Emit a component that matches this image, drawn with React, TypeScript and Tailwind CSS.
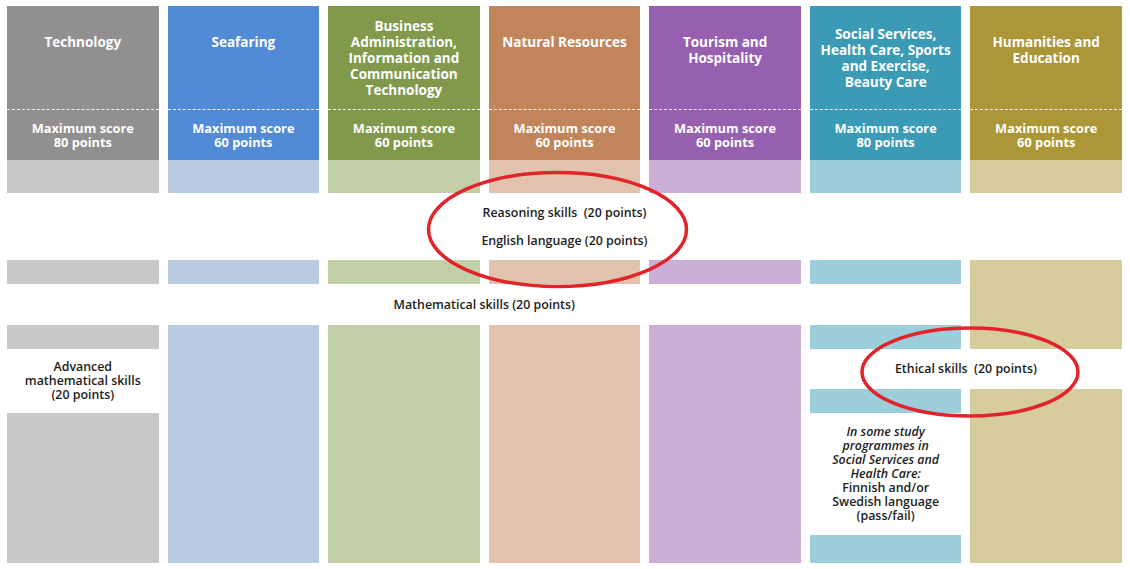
const font = { fontFamily: '"Open Sans", "Liberation Sans", sans-serif' };

type Programme = {
  title: string[];
  score: number;
  dark: string;
  light: string;
};

const programmes: Programme[] = [
  { title: ['Technology'], score: 80, dark: 'bg-[#918f90]', light: 'bg-[#c9c7c8]' },
  { title: ['Seafaring'], score: 60, dark: 'bg-[#518bd5]', light: 'bg-[#b9cbe1]' },
  {
    title: ['Business', 'Administration,', 'Information and', 'Communication', 'Technology'],
    score: 60,
    dark: 'bg-[#80994a]',
    light: 'bg-[#c2cfa6]',
  },
  { title: ['Natural Resources'], score: 60, dark: 'bg-[#c1845b]', light: 'bg-[#e0c2ad]' },
  { title: ['Tourism and', 'Hospitality'], score: 60, dark: 'bg-[#965fb0]', light: 'bg-[#cab0d7]' },
  {
    title: ['Social Services,', 'Health Care, Sports', 'and Exercise,', 'Beauty Care'],
    score: 80,
    dark: 'bg-[#3b9bb6]',
    light: 'bg-[#9ccddb]',
  },
  { title: ['Humanities and', 'Education'], score: 60, dark: 'bg-[#ab9737]', light: 'bg-[#d6cb9b]' },
];

const colStart = [
  'col-start-1',
  'col-start-2',
  'col-start-3',
  'col-start-4',
  'col-start-5',
  'col-start-6',
  'col-start-7',
];

function Header({ p, i }: { p: Programme; i: number }) {
  return (
    <div className={`${colStart[i]} row-start-1 flex flex-col ${p.dark} text-white`}>
      <div className="h-[104px] flex items-center justify-center border-b border-dashed border-white/90">
        <div className="min-h-[48px] text-center text-[13.5px] font-bold leading-4">
          {p.title.map((t) => (
            <div key={t}>{t}</div>
          ))}
        </div>
      </div>
      <div className="flex-1 flex flex-col items-center justify-center text-[12.8px] font-bold leading-[14px]">
        <div>Maximum score</div>
        <div>{p.score} points</div>
      </div>
    </div>
  );
}

export default function App() {
  const [tech, sea, bus, nat, tour, soc, hum] = programmes;
  return (
    <div className="relative w-[1130px] h-[569px] bg-white overflow-hidden" style={font}>
      <div className="grid grid-cols-7 gap-x-[9px] pl-[7px] pr-[8px] pt-[6px] grid-rows-[154px_33px_67px_24px_41px_24px_40px_24px_122px_28px] text-[#1d1d1b] text-[12.4px] font-semibold leading-[14px]">
        {programmes.map((p, i) => (
          <Header key={i} p={p} i={i} />
        ))}

        {/* top light band */}
        {programmes.map((p, i) => (
          <div key={`b${i}`} className={`${colStart[i]} row-start-2 ${p.light}`} />
        ))}

        {/* reasoning + english */}
        <div className="col-span-7 col-start-1 row-start-3 flex flex-col items-center justify-center gap-[14px]">
          <div>Reasoning skills&nbsp; (20 points)</div>
          <div>English language (20 points)</div>
        </div>

        {/* second light band, cols 1-6 */}
        {programmes.slice(0, 6).map((p, i) => (
          <div key={`d${i}`} className={`${colStart[i]} row-start-4 ${p.light}`} />
        ))}
        <div className={`col-start-7 row-start-4 row-span-3 ${hum.light}`} />

        {/* mathematical skills */}
        <div className="col-start-1 col-span-6 row-start-5 flex items-center justify-center">
          Mathematical skills (20 points)
        </div>

        {/* technology column */}
        <div className={`col-start-1 row-start-6 ${tech.light}`} />
        <div className="col-start-1 row-start-7 row-span-2 bg-white flex flex-col items-center justify-center text-center">
          <div>Advanced</div>
          <div>mathematical skills</div>
          <div>(20 points)</div>
        </div>
        <div className={`col-start-1 row-start-9 row-span-2 ${tech.light}`} />

        {/* plain tall columns */}
        <div className={`col-start-2 row-start-6 row-span-5 ${sea.light}`} />
        <div className={`col-start-3 row-start-6 row-span-5 ${bus.light}`} />
        <div className={`col-start-4 row-start-6 row-span-5 ${nat.light}`} />
        <div className={`col-start-5 row-start-6 row-span-5 ${tour.light}`} />

        {/* social services column */}
        <div className={`col-start-6 row-start-6 ${soc.light}`} />
        <div className="col-start-6 col-span-2 row-start-7 flex items-center justify-center">
          Ethical skills&nbsp; (20 points)
        </div>
        <div className={`col-start-6 row-start-8 ${soc.light}`} />
        <div className="col-start-6 row-start-9 flex flex-col items-center justify-center text-center">
          <div className="italic">In some study</div>
          <div className="italic">programmes in</div>
          <div className="italic">Social Services and</div>
          <div className="italic">Health Care:</div>
          <div>Finnish and/or</div>
          <div>Swedish language</div>
          <div>(pass/fail)</div>
        </div>
        <div className={`col-start-6 row-start-10 ${soc.light}`} />

        {/* humanities column bottom */}
        <div className={`col-start-7 row-start-8 row-span-3 ${hum.light}`} />
      </div>

      {/* hand-drawn highlight rings */}
      <svg className="absolute inset-0 pointer-events-none" width="1130" height="569" viewBox="0 0 1130 569">
        <ellipse cx="557.5" cy="229.5" rx="129" ry="57" fill="none" stroke="#e2232a" strokeWidth="3.5" />
        <ellipse cx="970" cy="372" rx="108" ry="44" fill="none" stroke="#e2232a" strokeWidth="3.5" />
      </svg>
    </div>
  );
}
